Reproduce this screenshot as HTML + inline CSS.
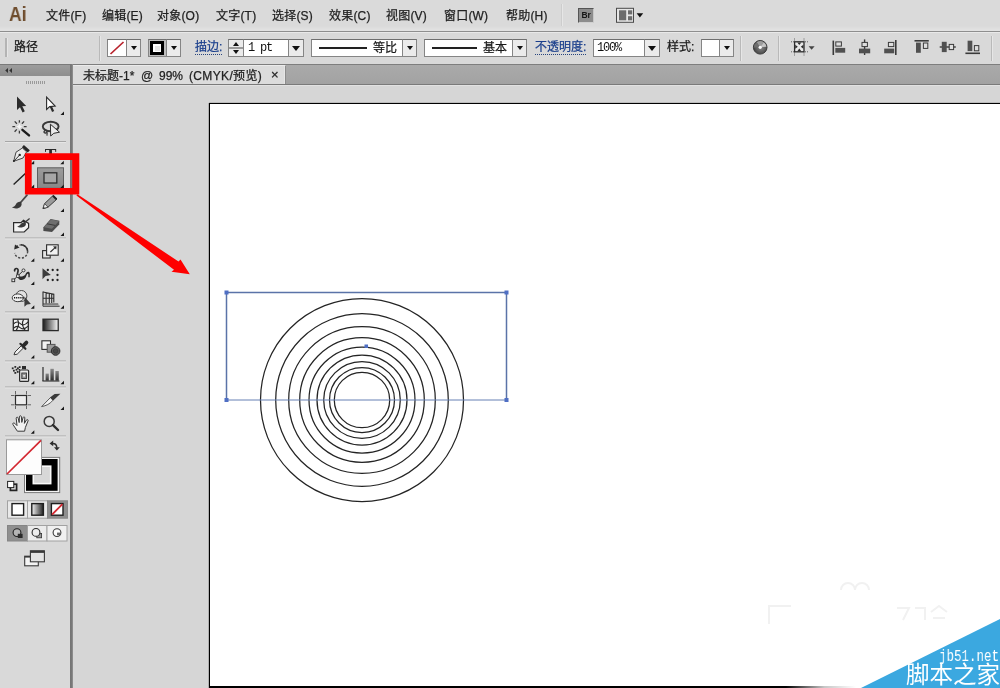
<!DOCTYPE html>
<html lang="zh-CN">
<head>
<meta charset="utf-8">
<title>未标题-1* @ 99% (CMYK/预览)</title>
<style>
*{box-sizing:border-box;margin:0;padding:0}
html,body{width:1000px;height:688px;overflow:hidden;background:#d6d6d6}
body{position:relative;font-family:"Liberation Sans","Noto Sans CJK SC",sans-serif;font-size:12px;color:#1a1a1a}
.abs{position:absolute}
#menubar{left:0;top:0;width:1000px;height:32px;background:linear-gradient(#dadada 0,#dadada 26px,#e2e2e2 30px);border-bottom:1px solid #8e8e8e}
#menubar .mi{position:absolute;top:9px;font-size:12px;line-height:15px;color:#222;white-space:nowrap;letter-spacing:0.2px}
#ailogo{left:8.500px;top:1.500px;font-size:20px;font-weight:bold;color:#6e4c2c;line-height:24px;letter-spacing:0;transform-origin:0 0;transform:scaleX(.875)}
#ctrlbar{left:0;top:32px;width:1000px;height:32px;background:#d9d9d9;border-top:1px solid #e9e9e9}
#tabstrip{left:73px;top:64px;width:927px;height:21px;background:linear-gradient(#aaa,#a2a2a2);border-top:1px solid #7e7e7e;border-bottom:1px solid #7a7a7a}
#tab{left:73px;top:65px;width:213px;height:19px;background:#dcdcdc;border-top:1px solid #ebebeb;border-right:1px solid #8c8c8c;box-shadow:inset -1px 0 0 #e6e6e6}
#tab span{position:absolute;top:2px;font-size:12px;line-height:16px;color:#222;white-space:nowrap}
#leftpanel{left:0;top:64px;width:70px;height:624px;background:#d9d9d9}
#leftborder{left:70px;top:64px;width:3px;height:624px;background:linear-gradient(90deg,#747474 0,#7a7a7a 66%,#9c9c9c 100%)}
#lphead{left:0;top:64px;width:70px;height:12px;background:linear-gradient(#9c9c9c,#8e8e8e);border-top:1px solid #7a7a7a}
#canvas{left:73px;top:85px;width:927px;height:603px;background:#d6d6d6;border-top:1px solid #e2e2e2}
#artboard{left:209px;top:103px;width:800px;height:585px;background:#fff;border:1px solid #000;border-width:1px 0 2px 1px;box-shadow:-1px 0 0 rgba(0,0,0,.18), 0 -1px 0 rgba(0,0,0,.12)}
.sep{position:absolute;top:36px;height:25px;background:#b9b9b9;border-right:1px solid #e6e6e6;width:2px}
.lbl{position:absolute;font-size:12px;line-height:16px;white-space:nowrap}
.link{color:#1b3f8c;border-bottom:1px dotted #27447e}
.box{position:absolute;background:#fff;border:1px solid #858585;border-top-color:#6e6e6e}
.ddbtn{position:absolute;background:#ebebeb;border:1px solid #858585;border-top-color:#6e6e6e}
.ddbtn:after{content:"";position:absolute;left:50%;top:50%;margin:-2px 0 0 -3px;border:3px solid transparent;border-top:4px solid #111;border-bottom:0}
.ddbtn.big:after{margin:-2px 0 0 -4px;border:4px solid transparent;border-top:5px solid #111;border-bottom:0}
.mono{position:absolute;font-family:"Liberation Mono","Noto Sans CJK SC",monospace;font-size:12px;line-height:14px;color:#111;white-space:nowrap;letter-spacing:-1.2px}
.spin:after{margin:2px 0 0 -3px;border:3px solid transparent;border-top:4px solid #111;border-bottom:0}
.spin:before{content:"";position:absolute;left:50%;top:50%;margin:-6px 0 0 -3px;border:3px solid transparent;border-bottom:4px solid #111;border-top:0}
.spin i{position:absolute;left:0;right:0;top:7px;height:2px;background:#9a9a9a}
.mi,.lbl,#tab span{-webkit-text-stroke:.25px currentColor}
/*GRAYAA*/.mi,.lbl,.mono,#ailogo,#tab span,.gaa,#tools{will-change:transform}
</style>
</head>
<body>
<div id="menubar" class="abs">
  <div id="ailogo" class="abs">Ai</div>
  <span class="mi" style="left:46px">文件(F)</span>
  <span class="mi" style="left:102px">编辑(E)</span>
  <span class="mi" style="left:157px">对象(O)</span>
  <span class="mi" style="left:216px">文字(T)</span>
  <span class="mi" style="left:272px">选择(S)</span>
  <span class="mi" style="left:329px">效果(C)</span>
  <span class="mi" style="left:386px">视图(V)</span>
  <span class="mi" style="left:444px">窗口(W)</span>
  <span class="mi" style="left:506px">帮助(H)</span>
  <div class="abs" style="left:561px;top:4px;height:22px;background:#cdcdcd;border-right:1px solid #e6e6e6;width:2px"></div>
  <div class="abs gaa" style="left:578px;top:8px;width:16px;height:15px;background:#8c8c8c;border:1px solid #555;border-right-color:#c8c8c8;border-bottom-color:#d0d0d0;color:#161616;font-size:8.500px;line-height:13.500px;text-align:center;font-weight:bold;letter-spacing:-.2px">Br</div>
  <svg class="abs" style="left:615px;top:7px" width="32" height="17" viewBox="615 7 32 17"><rect x="616.500" y="8.300" width="17" height="14" fill="#e6e6e6" stroke="#4a4a4a"/><rect x="619" y="10.300" width="7.200" height="10" fill="#6c6c6c"/><rect x="628" y="10.300" width="4.200" height="4.100" fill="#6c6c6c"/><rect x="628" y="16.200" width="4.200" height="4.100" fill="#6c6c6c"/><path d="M636.600,13.200h6.600l-3.300,4.300Z" fill="#111"/></svg>
</div>
<div id="ctrlbar" class="abs"></div>
<div id="ctrl" class="abs" style="left:0;top:0;width:1000px;height:64px">
  <div class="abs" style="left:5px;top:38px;width:3px;height:19px;background:#b4b4b4;border-right:1px solid #e6e6e6"></div>
  <span class="lbl" style="left:14px;top:39px">路径</span>
  <div class="sep" style="left:99px"></div>
  <div class="box" style="left:107px;top:39px;width:20px;height:18px"><svg width="18" height="16" viewBox="0 0 18 16" style="display:block"><line x1="2.500" y1="14" x2="15.500" y2="2" stroke="#b8222c" stroke-width="1.700"/></svg></div>
  <div class="ddbtn" style="left:126px;top:39px;width:15px;height:18px"></div>
  <div class="box" style="left:148px;top:39px;width:19px;height:18px;background:#bdbdbd"><div class="abs" style="left:1px;top:1px;width:14px;height:14px;border:3px solid #000;background:#fff"><div style="margin:1.500px;width:5px;height:5px;background:#e6e6e6"></div></div></div>
  <div class="ddbtn" style="left:166px;top:39px;width:15px;height:18px"></div>
  <span class="lbl link" style="left:195px;top:41px;line-height:13px">描边:</span>
  <div class="ddbtn spin" style="left:228px;top:39px;width:16px;height:18px"><i></i></div>
  <div class="box" style="left:243px;top:39px;width:46px;height:18px"><span class="mono" style="left:4px;top:1px">1 pt</span></div>
  <div class="ddbtn big" style="left:288px;top:39px;width:16px;height:18px"></div>
  <div class="box" style="left:311px;top:39px;width:92px;height:18px"><div class="abs" style="left:7px;top:7px;width:48px;height:2px;background:#222"></div><span class="lbl" style="left:61px;top:0px">等比</span></div>
  <div class="ddbtn" style="left:402px;top:39px;width:15px;height:18px"></div>
  <div class="box" style="left:424px;top:39px;width:89px;height:18px"><div class="abs" style="left:7px;top:7px;width:45px;height:2px;background:#222"></div><span class="lbl" style="left:58px;top:0px">基本</span></div>
  <div class="ddbtn" style="left:512px;top:39px;width:15px;height:18px"></div>
  <span class="lbl link" style="left:535px;top:41px;line-height:13px">不透明度:</span>
  <div class="box" style="left:593px;top:39px;width:52px;height:18px"><span class="mono" style="left:3px;top:1px">100%</span></div>
  <div class="ddbtn big" style="left:644px;top:39px;width:16px;height:18px"></div>
  <span class="lbl" style="left:667px;top:39px">样式:</span>
  <div class="box" style="left:701px;top:39px;width:19px;height:18px"></div>
  <div class="ddbtn" style="left:719px;top:39px;width:15px;height:18px"></div>
  <div class="sep" style="left:740px"></div>
  <div class="sep" style="left:778px"></div>
  <svg class="abs" style="left:745px;top:32px" width="255" height="32" viewBox="745 32 255 32">
    <defs><radialGradient id="gl" cx=".55" cy=".5" r=".6"><stop offset="0" stop-color="#8a8a8a"/><stop offset="1" stop-color="#3c3c3c"/></radialGradient></defs>
    <circle cx="760.200" cy="47.300" r="6.800" fill="url(#gl)" stroke="#3a3a3a" stroke-width="1"/>
    <path d="M760.200,47.300 L756.600,42.200 A6.200,6.200 0 0 1 763.800,42.200Z" fill="#9c9c9c"/>
    <path d="M760.200,47.300 L763.800,42.200 A6.200,6.200 0 0 1 766.400,46.800Z" fill="#c4c4c4"/>
    <path d="M760.200,47.300 L756.600,42.200 A6.200,6.200 0 0 0 754,47.600Z" fill="#6e6e6e"/>
    <circle cx="760.200" cy="47.300" r="1.600" fill="#fafafa"/>
    <g stroke="#555" stroke-width=".9" stroke-dasharray="1 1" fill="none"><path d="M794.500,38.500V41M804,38.500V41M794.500,52.500V55.500M804,52.500V55.500M791,41.800H794M805,41.800H808M791,51.800H794M805,51.800H808"/></g>
    <rect x="794.600" y="41.800" width="9.400" height="10" fill="#e8e8e8" stroke="#2c2c2c" stroke-width="1.300"/>
    <path d="M797.300,42.400h4l-2,2.600Z M797.300,51.200h4l-2,-2.600Z M795.200,44.800v4l2.600,-2Z M803.400,44.800v4l-2.600,-2Z" fill="#2c2c2c"/>
    <path d="M808.600,46.200h6l-3,3.600Z" fill="#444"/>
    <!-- align left -->
    <path d="M833.300,40.600V55" stroke="#3a3a3a" stroke-width="1.600"/>
    <rect x="835.800" y="41.900" width="5.600" height="4.200" fill="#dedede" stroke="#3a3a3a" stroke-width="1"/>
    <rect x="835.300" y="47.900" width="9.900" height="4.800" fill="#505050"/>
    <!-- align center h -->
    <path d="M864.600,39.400V55" stroke="#3a3a3a" stroke-width="1.400"/>
    <rect x="862" y="42.400" width="5.400" height="4.200" fill="#dedede" stroke="#3a3a3a" stroke-width="1"/>
    <rect x="859" y="48.600" width="11.200" height="4.700" fill="#505050"/>
    <!-- align right -->
    <path d="M895.800,40V55" stroke="#3a3a3a" stroke-width="1.600"/>
    <rect x="888.400" y="42.400" width="5.400" height="4.200" fill="#dedede" stroke="#3a3a3a" stroke-width="1"/>
    <rect x="884.200" y="48.600" width="10" height="4.700" fill="#505050"/>
    <!-- align top -->
    <path d="M914.500,40.800H928.800" stroke="#3a3a3a" stroke-width="1.600"/>
    <rect x="916" y="42.600" width="4.800" height="10.200" fill="#505050"/>
    <rect x="923.400" y="43" width="4.400" height="5.400" fill="#dedede" stroke="#3a3a3a" stroke-width="1"/>
    <!-- align center v -->
    <path d="M939.700,47H955.800" stroke="#3a3a3a" stroke-width="1.400"/>
    <rect x="941.800" y="41.800" width="4.900" height="10.300" fill="#505050"/>
    <rect x="949.200" y="44.400" width="4.400" height="5.200" fill="#dedede" stroke="#3a3a3a" stroke-width="1"/>
    <!-- align bottom -->
    <path d="M965.400,53.300H980" stroke="#3a3a3a" stroke-width="1.600"/>
    <rect x="967.600" y="40.700" width="4.700" height="10.400" fill="#505050"/>
    <rect x="974.400" y="45.600" width="4.400" height="5.200" fill="#dedede" stroke="#3a3a3a" stroke-width="1"/>
  </svg>
  <div class="sep" style="left:991px"></div>
</div>
<div id="tabstrip" class="abs"></div>
<div id="tab" class="abs"><span style="left:10px">未标题-1*</span><span style="left:68px">@</span><span style="left:86px">99%</span><span style="left:116px;letter-spacing:.35px">(CMYK/预览)</span><span style="left:198px;top:1px;font-size:13px">×</span></div>
<div id="canvas" class="abs"></div>
<div id="artboard" class="abs"></div>
<svg class="abs" style="left:0;top:0" width="1000" height="688" viewBox="0 0 1000 688">
  <g fill="none" stroke="#242424" stroke-width="1.250"><circle cx="362" cy="400" r="101.5"/><circle cx="362" cy="400" r="86.3"/><circle cx="362" cy="400" r="73.3"/><circle cx="362" cy="400" r="62.3"/><circle cx="362" cy="400" r="53.0"/><circle cx="362" cy="400" r="45.0"/><circle cx="362" cy="400" r="38.3"/><circle cx="362" cy="400" r="32.5"/><circle cx="362" cy="400" r="27.7"/></g>
  <path d="M226.500,400V292.500H506.500V400" fill="none" stroke="#5a73a8" stroke-width="1.500"/><path d="M226.500,400H506.500" fill="none" stroke="#6780b4" stroke-width="1"/>
  <g fill="#4f6fc4"><rect x="224.5" y="290.5" width="4" height="4"/><rect x="504.5" y="290.5" width="4" height="4"/><rect x="224.5" y="398" width="4" height="4"/><rect x="504.5" y="398" width="4" height="4"/><rect x="364.5" y="344.5" width="3.5" height="3.5"/></g>
  <defs><linearGradient id="fade" x1="0" y1="0" x2="1" y2="0"><stop offset="0" stop-color="#fff" stop-opacity="0"/><stop offset=".55" stop-color="#fff" stop-opacity=".78"/><stop offset="1" stop-color="#fff" stop-opacity="1"/></linearGradient></defs>
  <rect x="786" y="685" width="70" height="3" fill="url(#fade)"/><rect x="856" y="685" width="20" height="3" fill="#fff"/>
  <g fill="none" stroke="#f1f1f1" stroke-width="2"><path d="M769,624V606H791"/><path d="M841,590a7,7 0 0 1 14,0M855,590a7,7 0 0 1 14,0"/><path d="M897,608h12l-6,12M915,608h10v12M931,612l8,-6 8,6M933,618h12"/></g>
  <polygon points="861,688 1000,619 1000,688" fill="#3ba8e0"/>
</svg>
<div class="abs gaa" style="left:905.500px;top:660px;width:96px;font-size:23.500px;line-height:30px;color:#fff;white-space:nowrap;letter-spacing:0px;font-family:'Liberation Sans','Noto Sans CJK SC',sans-serif;font-weight:400">脚本之家</div>
<div class="abs gaa" style="left:938.500px;top:646.500px;font-size:17px;line-height:20px;color:#fff;white-space:nowrap;font-family:'Liberation Mono',monospace;transform-origin:0 0;transform:scaleX(0.735)">jb51.net</div>
<div id="leftpanel" class="abs"></div>
<div id="lphead" class="abs"></div>
<div id="leftborder" class="abs"></div>
<!--TOOLS-->
<svg id="tools" class="abs" style="left:0;top:0" width="80" height="688" viewBox="0 0 80 688">
  <defs>
    <linearGradient id="gbw" x1="0" y1="0" x2="1" y2="0"><stop offset="0" stop-color="#1a1a1a"/><stop offset="1" stop-color="#fafafa"/></linearGradient>
    <linearGradient id="gwb" x1="0" y1="0" x2="1" y2="0"><stop offset="0" stop-color="#f4f4f4"/><stop offset="1" stop-color="#222"/></linearGradient>
    <linearGradient id="gbtn" x1="0" y1="0" x2="0" y2="1"><stop offset="0" stop-color="#9c9c9c"/><stop offset="1" stop-color="#878787"/></linearGradient>
    <linearGradient id="gbar" x1="0" y1="0" x2="0" y2="1"><stop offset="0" stop-color="#8a8a8a"/><stop offset="1" stop-color="#2c2c2c"/></linearGradient>
  </defs>
  <!-- header arrows & grip -->
  <path d="M8,68 L8,73 L5.2,70.5Z M12,68 L12,73 L9.2,70.5Z" fill="#333"/>
  <g stroke="#9a9a9a" stroke-width="1"><path d="M26.5,81v3M28.5,81v3M30.5,81v3M32.5,81v3M34.5,81v3M36.5,81v3M38.5,81v3M40.5,81v3M42.5,81v3M44.5,81v3"/></g>
  <!-- separators -->
  <g stroke="#a6a6a6" stroke-width="1"><path d="M5,141.500H66M5,238H66M5,312H66M5,361H66M5,387H66M5,436H66"/></g>
  <g stroke="#e6e6e6" stroke-width="1"><path d="M5,142.500H66M5,239H66M5,313H66M5,362H66M5,388H66M5,437H66"/></g>
  <!-- 1 selection -->
  <path d="M17,96.5 L17,110 L20,107.2 L22.6,112.4 L24.8,111.3 L22.3,106.3 L26.2,106Z" fill="#2b2b2b"/>
  <!-- 2 direct selection -->
  <path d="M49.600,106.400 L52.100,112 L54.200,111 L51.500,105.600Z" fill="#2b2b2b"/><path d="M46.600,97 L46.600,109.400 L49.700,106.600 L55.200,106Z" fill="#fff" stroke="#2b2b2b" stroke-width="1.100" stroke-linejoin="miter"/>
  <!-- 3 magic wand -->
  <g stroke="#3a3a3a" stroke-width="1.300" fill="none"><path d="M19.400,120.300v2.800M19.400,130.600v2.800M12.400,126.600h3M23.600,126.600h3M14.700,121.400l2.200,2.400M24.100,121.400l-2.200,2.400M14.600,131.800l2.200,-2.400"/></g>
  <path d="M19.400,122.600l1.300,2.800 2.900,1.200 -2.900,1.200 -1.300,2.800 -1.300,-2.800 -2.900,-1.200 2.900,-1.200Z" fill="#f6f6f6" stroke="#c8c8c8" stroke-width=".6"/>
  <path d="M22.400,129.800 L29,135.400" stroke="#1c1c1c" stroke-width="2.400" stroke-linecap="round"/>
  <!-- 4 lasso -->
  <ellipse cx="50.700" cy="126.500" rx="7.900" ry="4.700" fill="none" stroke="#383838" stroke-width="1.900"/>
  <path d="M46.200,130.200 c-2.600,0.600 -3,2.600 -0.800,2.800 c1.800,0.200 2.200,-1.400 0.800,-1.600 M46.600,131.600 q1.400,1.800 0.200,4" fill="none" stroke="#383838" stroke-width="1.300"/>
  <path d="M50.400,124.200 L59.500,132.200 L53.800,133.300 L50.700,136Z" fill="#ececec" stroke="#2b2b2b" stroke-width="1" stroke-linejoin="miter"/>
  <!-- 5 pen -->
  <path d="M13.700,161.300 L16,152.200 L22.400,148 L26.600,151.800 L23,158Z" fill="#ececec" stroke="#444" stroke-width="1" stroke-linejoin="round"/>
  <path d="M22.900,146.100 L28.800,151.300" stroke="#262626" stroke-width="3"/>
  <path d="M13.900,161.100 L19.400,155.300" stroke="#333" stroke-width="1"/>
  <circle cx="19.700" cy="154.900" r="1.200" fill="#262626"/>
  <circle cx="13.900" cy="161.100" r="1" fill="#262626"/>
  <!-- 6 type -->
  <text x="50.500" y="159.700" text-anchor="middle" font-family="Liberation Serif, serif" font-size="17.500" font-weight="bold" fill="#2a2a2a">T</text>
  <!-- 7 line -->
  <path d="M13.6,184.6 L28,171" stroke="#222" stroke-width="1.4"/>
  <!-- 8 rectangle (selected) -->
  <rect x="37.500" y="167.800" width="26" height="20.500" fill="url(#gbtn)" stroke="#5e5e5e" stroke-width="1"/>
  <rect x="44" y="172.800" width="12.800" height="10.200" fill="#a6a6a6" stroke="#303030" stroke-width="1.300"/>
  <!-- 9 paintbrush -->
  <path d="M27,195.2 L20.2,203" stroke="#4a4a4a" stroke-width="1.8" stroke-linecap="round"/>
  <path d="M20.8,202 c-2,-0.5 -4,0.5 -5,2.5 c-1,1.8 -2.4,2.6 -3.8,2.8 c2,1.6 6.6,1.6 8.6,-0.6 c1.4,-1.6 1.4,-3.6 0.2,-4.7Z" fill="#3a3a3a"/>
  <!-- 10 pencil -->
  <path d="M43,208.6 L44.6,203.6 L53.2,195.4 L57,199 L48,207.2Z" fill="#9a9a9a" stroke="#3a3a3a" stroke-width="1"/>
  <path d="M52.2,196.4 L53.6,195 L57.2,198.6 L55.8,200Z" fill="#222"/>
  <path d="M43,208.6 L44.6,203.6 L48,207.2Z" fill="#f2f2f2" stroke="#3a3a3a" stroke-width=".8"/>
  <path d="M43,208.6l1.8,-0.5 -1.2,-1.2Z" fill="#222"/>
  <!-- 11 blob brush -->
  <path d="M13.6,222.6 H21 L23.5,220.2 L28.6,223.4 L28.6,227.8 L24.2,232 H13.6Z" fill="#f4f4f4" stroke="#2c2c2c" stroke-width="1.2" stroke-linejoin="miter"/>
  <path d="M29.6,218.4 L24.2,223" stroke="#3a3a3a" stroke-width="1.3"/>
  <path d="M25.4,222.4 c-2.5,-0.6 -4,0.8 -5,2.2 c-0.8,1.2 -2,1.8 -3.2,1.8 c1.8,1.6 6,1.4 7.8,-0.4 c1.2,-1.2 1.2,-2.8 0.4,-3.6Z" fill="#3a3a3a"/>
  <!-- 12 eraser -->
  <path d="M43.4,227.2 L50.6,219 L59.4,220.8 L59.2,224.6 L52,232 L43.4,231Z" fill="#4c4c4c"/>
  <path d="M43.8,227.2 L51,219.4 L59,221 L52,228.8Z" fill="#6e6e6e"/>
  <path d="M47,223.8 L55.2,225.4" stroke="#3a3a3a" stroke-width="1"/>
  <!-- 13 rotate -->
  <path d="M16.2,247 A6.6,6.6 0 1 1 14.6,253" fill="none" stroke="#4a4a4a" stroke-width="1.4" stroke-dasharray="2.2 1.6"/>
  <path d="M21,244.8 A6.6,6.6 0 0 1 27.6,251.4" fill="none" stroke="#333" stroke-width="1.5"/>
  <path d="M14.2,249.6 L15,244.6 L19.6,247.6Z" fill="#2a2a2a"/>
  <!-- 14 scale -->
  <rect x="42.6" y="250.6" width="7.6" height="7.4" fill="#e4e4e4" stroke="#2c2c2c" stroke-width="1.1"/>
  <rect x="46.6" y="244.8" width="11.6" height="10.4" fill="#f2f2f2" stroke="#2c2c2c" stroke-width="1.1"/>
  <path d="M50.4,252 L55.4,247.4" stroke="#2c2c2c" stroke-width="1.1"/>
  <path d="M56.6,246.2 L56.2,249.6 L53,246.6Z" fill="#2c2c2c"/>
  <!-- 15 width tool -->
  <path d="M14.600,270.800 C14.400,268 18.300,267.600 18.100,270.600 C18,272.200 17,273.600 17.400,275.400" fill="none" stroke="#2c2c2c" stroke-width="1.700" stroke-linecap="round"/>
  <path d="M17.300,275 C19.600,277.300 23,277 25.400,274.400 C26.200,273 26.800,271.800 28.200,271.800 C30,271.800 30,274 29.700,277.200 L28.300,277.200 C28.500,274.600 28.300,273.600 27.600,273.800 C26.800,274 26.600,275.600 25.800,277.200 C24.400,279.800 21.400,280.600 19.400,279.400 C17.900,278.500 17.300,276.800 17.300,275Z" fill="#2c2c2c"/>
  <path d="M13.400,280.200 L23.300,270.600" stroke="#2c2c2c" stroke-width="1"/>
  <rect x="11.900" y="278.900" width="2.800" height="2.800" fill="#e8e8e8" stroke="#2c2c2c" stroke-width=".9"/>
  <circle cx="23.500" cy="270.400" r="1.500" fill="#e8e8e8" stroke="#2c2c2c" stroke-width=".9"/>
  <circle cx="17.900" cy="276.100" r="1.500" fill="#f4f4f4" stroke="#2c2c2c" stroke-width=".9"/>
  <!-- 16 free transform -->
  <g fill="#222"><circle cx="47.800" cy="270" r="1.150"/><circle cx="52.700" cy="270" r="1.150"/><circle cx="57.500" cy="270" r="1.150"/><circle cx="57.500" cy="275" r="1.150"/><circle cx="57.500" cy="280" r="1.150"/><circle cx="52.700" cy="280" r="1.150"/><circle cx="47.800" cy="280" r="1.150"/></g>
  <path d="M42.500,268.300 L42.500,279.200 L45.600,276 L50.900,275Z" fill="#3c3c3c"/>
  <!-- 17 shape builder -->
  <circle cx="21.400" cy="296" r="5.500" fill="#e2e2e2" stroke="#4a4a4a" stroke-width="1"/>
  <ellipse cx="17.800" cy="297.800" rx="5.600" ry="3.900" fill="#f0f0f0" stroke="#3a3a3a" stroke-width="1"/>
  <path d="M14,297.700 H24" stroke="#111" stroke-width="1.400" stroke-dasharray="1.200 0.900"/>
  <path d="M24.400,296.600 L24.400,306.800 L27,304.600 L30.900,303.900Z" fill="#3c3c3c"/>
  <!-- 18 perspective grid -->
  <g stroke="#2c2c2c" stroke-width="1.100" fill="none"><path d="M43,291.600V306.200"/><path d="M43,292 L53.800,294.200 V302.600 M46.100,292.600V303.600 M49.300,293.300V303.200 M51.700,293.800V302.900 M43,298.200H53.800"/><path d="M43,304.100 H58.200"/><path d="M43,306.200 H59.600" stroke-width="1"/></g>
  <path d="M43.500,304.600H58.600L59.400,305.700H43.500Z" fill="#9a9a9a"/>
  <!-- 19 mesh -->
  <rect x="13.3" y="319.2" width="15" height="11.4" fill="#f2f2f2" stroke="#2a2a2a" stroke-width="1.3"/>
  <g stroke="#2a2a2a" stroke-width="1.1" fill="none"><path d="M13.4,324 c2.4,-2.4 4.4,-2.8 6.6,-0.6 s4.6,2.2 8.2,-1.6"/><path d="M13.4,328.4 c2.6,-2.6 4.6,-2.6 6.600,-0.8 s4.800,1.800 8.200,-1.4"/><path d="M17.6,319.4 c1.400,2.600 1.600,6 -1.400,11"/><path d="M23.6,319.400 c-2,3.400 -1.200,7.400 1.600,11"/></g>
  <!-- 20 gradient -->
  <rect x="43" y="319.200" width="15.200" height="11.400" fill="url(#gbw)" stroke="#2a2a2a" stroke-width="1.300"/>
  <!-- 21 eyedropper -->
  <path d="M14,354.800 L15,352 L21.600,345.400 L23.800,347.600 L17.200,354.200Z" fill="#f0f0f0" stroke="#3a3a3a" stroke-width="1"/>
  <path d="M20.400,343.800 L25.400,348.800" stroke="#2a2a2a" stroke-width="2.200" stroke-linecap="round"/>
  <path d="M23.200,345.800 L26.400,342.600" stroke="#2a2a2a" stroke-width="3.800" stroke-linecap="round"/>
  <!-- 22 blend -->
  <rect x="41.900" y="340.800" width="8.600" height="8.600" fill="#f2f2f2" stroke="#2c2c2c" stroke-width="1.100"/>
  <rect x="47.200" y="344.400" width="7.800" height="7.800" fill="#9a9a9a" stroke="#555" stroke-width="1"/>
  <circle cx="55.600" cy="351" r="4.300" fill="#5a5a5a" stroke="#2c2c2c" stroke-width="1"/><circle cx="55.600" cy="351" r="2.300" fill="#484848" stroke="#333" stroke-width=".6"/>
  <!-- 23 symbol sprayer -->
  <g fill="#2a2a2a"><rect x="11.800" y="367.400" width="1.800" height="1.800"/><rect x="14.400" y="366" width="1.800" height="1.800"/><rect x="17" y="367.400" width="1.800" height="1.800"/><rect x="13" y="369.800" width="1.800" height="1.800"/><rect x="15.600" y="368.800" width="1.800" height="1.800"/><rect x="14.400" y="372" width="1.800" height="1.800"/><rect x="16.800" y="371" width="1.800" height="1.800"/><rect x="18.800" y="366.200" width="1.800" height="1.800"/><rect x="18.600" y="369" width="1.400" height="1.400"/></g>
  <rect x="22" y="366" width="4" height="3.200" fill="#2c2c2c"/>
  <rect x="19.600" y="370" width="9" height="11.400" rx="1" fill="#e8e8e8" stroke="#2c2c2c" stroke-width="1.200"/>
  <rect x="21.800" y="373" width="4.600" height="5.600" fill="#9a9a9a" stroke="#333" stroke-width=".9"/>
  <rect x="23.300" y="375" width="1.600" height="1.600" fill="#f4f4f4"/>
  <!-- 24 graph -->
  <path d="M43,367V381" stroke="#2c2c2c" stroke-width="1.200"/>
  <rect x="45.600" y="373.600" width="3.200" height="7" fill="url(#gbar)"/>
  <rect x="50.400" y="368.800" width="3.400" height="11.800" fill="url(#gbar)"/>
  <rect x="55.400" y="371" width="3.400" height="9.600" fill="url(#gbar)"/>
  <path d="M42.400,381H59.400" stroke="#2c2c2c" stroke-width="1.100"/>
  <!-- 25 artboard -->
  <rect x="15.500" y="395.500" width="11" height="9.300" fill="#ededed" stroke="#2c2c2c" stroke-width="1.200"/>
  <g stroke="#5a5a5a" stroke-width=".9"><path d="M11,395.500H14.500M27.500,395.500H31M11,404.800H14.500M27.500,404.800H31M15.500,391V394.500M26.500,391V394.500M15.500,405.800V409M26.500,405.800V409"/></g>
  <!-- 26 slice -->
  <path d="M41.600,406.600 L50.400,397.600 L53,400.200 C50,404 46,405.800 41.600,406.600Z" fill="#f2f2f2" stroke="#4a4a4a" stroke-width=".9"/>
  <path d="M50,397.400 L54.600,394 L60.400,393.800 L53.200,400.600Z" fill="#3a3a3a"/>
  <!-- 27 hand -->
  <path d="M17.400,431.200 L13,424.600 c-0.800,-1.400 0.800,-2.400 1.800,-1.200 L17,425.600 L16.200,418.200 c0,-1.400 1.800,-1.400 2,0 L19.200,422.600 L19.400,416.800 c0,-1.400 2,-1.400 2,0 L21.800,422.400 L23,417.600 c0.400,-1.200 2,-0.800 1.800,0.400 L24.400,423.400 L26.400,420 c0.800,-1 2.200,-0.200 1.600,1 L25.400,427.400 L24.600,431.200Z" fill="#f2f2f2" stroke="#3a3a3a" stroke-width="1" stroke-linejoin="round"/>
  <!-- 28 zoom -->
  <circle cx="49.200" cy="421.400" r="5" fill="#e2e2e2" stroke="#3a3a3a" stroke-width="1.500"/>
  <path d="M53,425.200 L58,430" stroke="#2c2c2c" stroke-width="2.400" stroke-linecap="round"/>
  <!-- swap arrows -->
  <path d="M52.200,443.400 q4.600,-0.200 4.600,4.400" fill="none" stroke="#2c2c2c" stroke-width="1.500"/>
  <path d="M53.200,440.600 V446.200 L49.600,443.400Z" fill="#2c2c2c"/>
  <path d="M54,447.200 H59.800 L56.900,450.600Z" fill="#2c2c2c"/>
  <!-- stroke swatch -->
  <rect x="24.500" y="457.400" width="35.200" height="35.200" fill="#f4f4f4" stroke="#7a7a7a" stroke-width="1"/>
  <rect x="26" y="459" width="31.600" height="31.800" fill="#000"/>
  <rect x="33.300" y="466.200" width="17.400" height="17.400" fill="#d8d8d8" stroke="#fafafa" stroke-width="1.600"/>
  <!-- fill swatch -->
  <rect x="6.500" y="439.800" width="35" height="34.700" fill="#fdfdfd" stroke="#9a9a9a" stroke-width="1"/>
  <path d="M7,474 L41,440.300" stroke="#d32730" stroke-width="1.700"/>
  <!-- default fill/stroke -->
  <rect x="10.400" y="484.200" width="6.200" height="6.200" fill="#d8d8d8" stroke="#222" stroke-width="1.700"/>
  <rect x="7.600" y="481.400" width="6.200" height="6.200" fill="#fff" stroke="#222" stroke-width="1"/>
  <!-- color / gradient / none -->
  <rect x="7.500" y="500.800" width="20" height="17.400" fill="#e9e9e9" stroke="#a2a2a2"/>
  <rect x="27.500" y="500.800" width="20" height="17.400" fill="#e9e9e9" stroke="#a2a2a2"/>
  <rect x="47.500" y="500.800" width="20" height="17.400" fill="#8f8f8f" stroke="#8a8a8a"/>
  <rect x="12" y="503.600" width="11.600" height="11.600" fill="#fff" stroke="#1e1e1e" stroke-width="1.400"/>
  <rect x="31.800" y="503.600" width="11.600" height="11.600" fill="url(#gwb)" stroke="#1e1e1e" stroke-width="1.400"/>
  <rect x="51.400" y="503.600" width="11.600" height="11.600" fill="#fff" stroke="#1e1e1e" stroke-width="1.400"/>
  <path d="M52,514.600 L62.400,504.200" stroke="#d32730" stroke-width="1.800"/>
  <!-- drawing modes -->
  <rect x="7.500" y="525.500" width="20" height="15.500" fill="#8f8f8f" stroke="#858585"/>
  <rect x="27.500" y="525.500" width="19.500" height="15.500" fill="#ececec" stroke="#a2a2a2"/>
  <rect x="47" y="525.500" width="20" height="15.500" fill="#f0f0f0" stroke="#a2a2a2"/>
  <circle cx="17" cy="532.600" r="3.900" fill="#b4b4b4" stroke="#222" stroke-width="1.100"/>
  <rect x="17.800" y="533.800" width="4.800" height="4.200" fill="#2a2a2a"/>
  <rect x="36.800" y="533.600" width="4.800" height="4.200" fill="#9a9a9a" stroke="#333" stroke-width=".8"/>
  <circle cx="36" cy="532.400" r="3.900" fill="#ececec" stroke="#2a2a2a" stroke-width="1.100"/>
  <circle cx="57" cy="532.600" r="3.900" fill="#fafafa" stroke="#3a3a3a" stroke-width="1.100"/>
  <rect x="57" y="532.600" width="3" height="2.600" fill="#6a6a6a"/>
  <!-- screen mode -->
  <rect x="24.700" y="556.200" width="13.600" height="9.600" fill="#f4f4f4" stroke="#3a3a3a" stroke-width="1.100"/>
  <path d="M24.700,556.800H38.300" stroke="#3a3a3a" stroke-width="1.600"/>
  <rect x="30.400" y="550.800" width="14" height="11" fill="#e4e4e4" stroke="#3a3a3a" stroke-width="1.100"/>
  <path d="M30.400,551.800H44.400" stroke="#3a3a3a" stroke-width="2.200"/>
  <!-- flyout triangles -->
  <g fill="#161616">
    <path d="M64,111.5V115H60.5Z"/>
    <path d="M34.200,160.800V164.300H30.700Z"/><path d="M63.800,160.800V164.300H60.300Z"/>
    <path d="M34.200,184.500V188H30.700Z"/><path d="M63.800,184.500V188H60.300Z"/>
    <path d="M64,208.5V212H60.5Z"/>
    <path d="M64,232.5V236H60.5Z"/>
    <path d="M34.3,258.2V261.7H30.8Z"/><path d="M64,258.2V261.7H60.5Z"/>
    <path d="M34.3,281.5V285H30.8Z"/>
    <path d="M34.3,305.3V308.8H30.8Z"/><path d="M64,305.3V308.8H60.5Z"/>
    <path d="M34.3,355V358.5H30.8Z"/>
    <path d="M34.3,380.7V384.2H30.8Z"/><path d="M64,380.7V384.2H60.5Z"/>
    <path d="M64,406.5V410H60.5Z"/>
    <path d="M34.3,430.3V433.8H30.8Z"/>
  </g>
</svg>
<!--/TOOLS-->
<svg class="abs" style="left:0;top:0" width="1000" height="688" viewBox="0 0 1000 688">
  <path fill-rule="evenodd" d="M24.900,153.300H79.300V194.500H24.900Z M31.700,160.100V188.100H72.200V160.100Z" fill="#fe0000"/>
  <polygon points="76.400,195.500 77.400,194.300 178.500,261.500 180.5,259.5 189.8,274.2 171.5,271.8 174,269.8" fill="#fe0000"/>
</svg>
</body>
</html>
